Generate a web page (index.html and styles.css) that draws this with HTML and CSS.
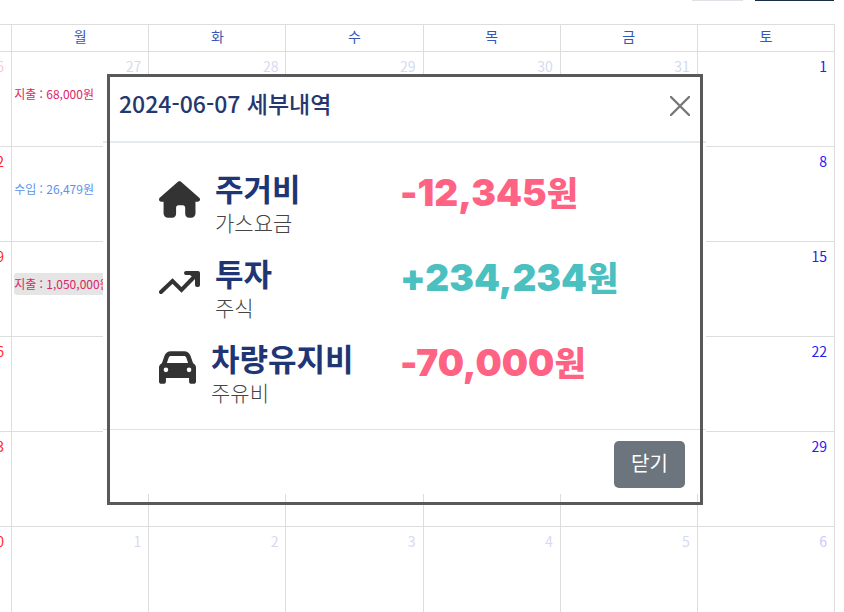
FILE: index.html
```html
<!DOCTYPE html>
<html lang="ko">
<head>
<meta charset="utf-8">
<meta name="viewport" content="width=device-width, initial-scale=1">
<title>가계부</title>
<link rel="stylesheet" href="styles.css">
</head>
<body>
<div class="toolbar">
  <button class="tool tool-light" type="button" aria-label="오늘"></button>
  <button class="tool tool-dark" type="button" aria-label="추가"></button>
</div>

<table class="calendar">
  <thead>
    <tr><th></th><th>월</th><th>화</th><th>수</th><th>목</th><th>금</th><th>토</th></tr>
  </thead>
  <tbody>
    <tr>
      <td class="sun other">26</td>
      <td><div class="day other">27</div><div class="event expense">지출 : 68,000원</div></td>
      <td class="other">28</td><td class="other">29</td><td class="other">30</td><td class="other">31</td>
      <td class="sat">1</td>
    </tr>
    <tr>
      <td class="sun">2</td>
      <td><div class="day"></div><div class="event income">수입 : 26,479원</div></td>
      <td></td><td></td><td></td><td></td><td class="sat">8</td>
    </tr>
    <tr>
      <td class="sun">9</td>
      <td><div class="day"></div><div class="event expense active">지출 : 1,050,000원</div></td>
      <td></td><td></td><td></td><td></td><td class="sat">15</td>
    </tr>
    <tr><td class="sun">16</td><td></td><td></td><td></td><td></td><td></td><td class="sat">22</td></tr>
    <tr><td class="sun">23</td><td></td><td></td><td></td><td></td><td></td><td class="sat">29</td></tr>
    <tr>
      <td class="sun">30</td>
      <td class="other">1</td><td class="other">2</td><td class="other">3</td><td class="other">4</td><td class="other">5</td>
      <td class="sat other">6</td>
    </tr>
  </tbody>
</table>

<div class="frame" role="dialog" aria-labelledby="dialog-title">
  <div class="dialog">
    <header class="dialog-head">
      <h1 id="dialog-title">2024-06-07 세부내역</h1>
      <button class="close" type="button" aria-label="창 닫기">
        <svg viewBox="0 0 20 20" width="20" height="20"><path d="M1 1L19 19M19 1L1 19" fill="none" stroke="currentColor" stroke-width="2.4" stroke-linecap="round"/></svg>
      </button>
    </header>
    <ul class="entries">
      <li class="entry">
        <div class="category">
          <svg viewBox="0 0 576 512" width="41" height="37"><path fill="currentColor" d="M576 256c0 18-15 32-32 32h-32l1 160c0 36-27 64-63 64h-26c-36 0-56-24-56-56v-88c0-18-14-32-32-32h-64c-18 0-32 14-32 32v88c0 32-20 56-56 56h-56c-36 0-64-28-64-64V288H32c-18 0-32-14-32-32 0-9 3-17 10-24L266 8c7-7 15-8 22-8s15 2 21 7l256 225c8 7 12 15 11 24z"/></svg>
          <div><h2>주거비</h2><p>가스요금</p></div>
        </div>
        <strong class="amount minus">-12,345<span>원</span></strong>
      </li>
      <li class="entry">
        <div class="category">
          <svg viewBox="0 0 41 37" width="41" height="37"><path fill="none" stroke="currentColor" stroke-width="4" stroke-linecap="round" stroke-linejoin="miter" d="M2 26L13.500 15L22.500 24L37 9"/><path fill="currentColor" d="M27 5H39Q41 5 41 7V19Q41 21 39 21H38Q36 21 36 19V13L31 9H27Q25 9 25 7T27 5z"/></svg>
          <div><h2>투자</h2><p>주식</p></div>
        </div>
        <strong class="amount plus">+234,234<span>원</span></strong>
      </li>
      <li class="entry">
        <div class="category">
          <svg viewBox="0 0 512 448" width="37" height="33"><path fill="currentColor" fill-rule="evenodd" d="M135 85L109 160H403L377 85C372 73 360 64 347 64H165C152 64 140 73 135 85zM40 165L75 64C88 26 124 0 165 0H347C388 0 424 26 437 64L472 165C496 175 512 198 512 224V416C512 434 498 448 480 448H448C430 448 416 434 416 416V368H96V416C96 434 82 448 64 448H32C14 448 0 434 0 416V224C0 198 16 175 40 165zM128 256A32 32 0 1 0 64 256A32 32 0 1 0 128 256zM448 256A32 32 0 1 0 384 256A32 32 0 1 0 448 256z"/></svg>
          <div><h2>차량유지비</h2><p>주유비</p></div>
        </div>
        <strong class="amount minus">-70,000<span>원</span></strong>
      </li>
    </ul>
    <footer class="dialog-foot"><button class="dismiss" type="button">닫기</button></footer>
  </div>
</div>
</body>
</html>
```
FILE: styles.css
```css
* { box-sizing: border-box; }

body {
  margin: 0;
  height: 100vh;
  overflow: hidden;
  background: #fff;
  font-family: "Noto Sans CJK KR", "Noto Sans", sans-serif;
}

h1, h2, p, ul { margin: 0; padding: 0; }
svg { display: block; }

.toolbar {
  display: flex;
  justify-content: flex-end;
  gap: 12px;
  height: 24px;
  padding-right: 10px;
}

.tool { height: 1px; padding: 0; border: 0; }
.tool-light { width: 51px; background: #dee2e6; }
.tool-dark { width: 79px; background: #1c2d48; }

/* The Sunday column runs off the left edge. */
.calendar {
  width: calc(100% + 117px);
  margin-left: -126px;
  border-collapse: collapse;
  table-layout: fixed;
}

.calendar th, .calendar td { border: 1px solid #ddd; }

.calendar th {
  height: 27px;
  padding: 0 0 4px;
  color: #3557b7;
  font-size: 14px;
  font-weight: 400;
  line-height: 20px;
}

.calendar td {
  height: 95px;
  padding: 4px 7px 0 2px;
  color: #3557b7;
  font-size: 14px;
  line-height: 20px;
  text-align: right;
  vertical-align: top;
}

.calendar .other { color: #d5daf1; }
.calendar .sun { color: #ff2a2a; }
.calendar .sun.other { color: #ffc9c9; }
.calendar .sat { color: #2a20f0; }
.calendar .sat.other { color: #cac8fc; }

.day { height: 20px; }

.event {
  margin-top: 7px;
  border-radius: 3px;
  font-size: 12px;
  line-height: 22px;
  text-align: left;
  white-space: nowrap;
}

.expense { color: #dc2467; }
.income { color: #5b93ec; }
.active { background: #e5e5e5; }

.frame {
  position: absolute;
  top: 74px;
  left: 107px;
  right: 141px;
  padding: 3px 0 11px;
}

.frame::after {
  content: "";
  position: absolute;
  inset: 0;
  border: 3px solid #595959;
  pointer-events: none;
}

/* The white sheet is slightly wider than its frame. */
.dialog {
  margin: 0 -3px 0 -4px;
  background: #fff;
}

.dialog-head {
  display: flex;
  align-items: flex-start;
  justify-content: space-between;
  height: 66px;
  padding: 9px 16px 0;
  border-bottom: 2px solid #e5eaef;
}

.dialog-head h1 {
  color: #24386f;
  font-size: 23px;
  font-weight: 500;
  line-height: 34px;
}

.close {
  margin-top: 10px;
  padding: 0;
  border: 0;
  background: none;
  color: #777;
}

.entries {
  padding: 25px 20px 12px 56px;
  list-style: none;
}

.entry {
  display: grid;
  grid-template-columns: 241px 1fr;
  height: 79px;
}

.entry + .entry { margin-top: 6px; }

.category {
  display: flex;
  align-items: flex-start;
  gap: 15px;
  color: #333;
}

.category svg { flex: none; margin-top: 13px; }

.category h2 {
  color: #203674;
  font-size: 31px;
  font-weight: 700;
  line-height: 40px;
}

.category p {
  color: #444;
  font-size: 21px;
  font-weight: 300;
  line-height: 28px;
}

.amount {
  font-family: Inter, "Noto Sans CJK KR", sans-serif;
  font-size: 37px;
  font-weight: 900;
  line-height: 50px;
}

.amount span { font-size: 34px; }
.minus { color: #ff6384; }
.plus { color: #4bc0c0; }

.dialog-foot {
  display: flex;
  justify-content: flex-end;
  padding: 11px 21px 6px;
  border-top: 1px solid #dee2e6;
}

.dismiss {
  width: 71px;
  height: 47px;
  padding: 0 0 4px;
  border: 0;
  border-radius: 5px;
  background: #6c757d;
  color: #fff;
  font-family: inherit;
  font-size: 20px;
}
```
